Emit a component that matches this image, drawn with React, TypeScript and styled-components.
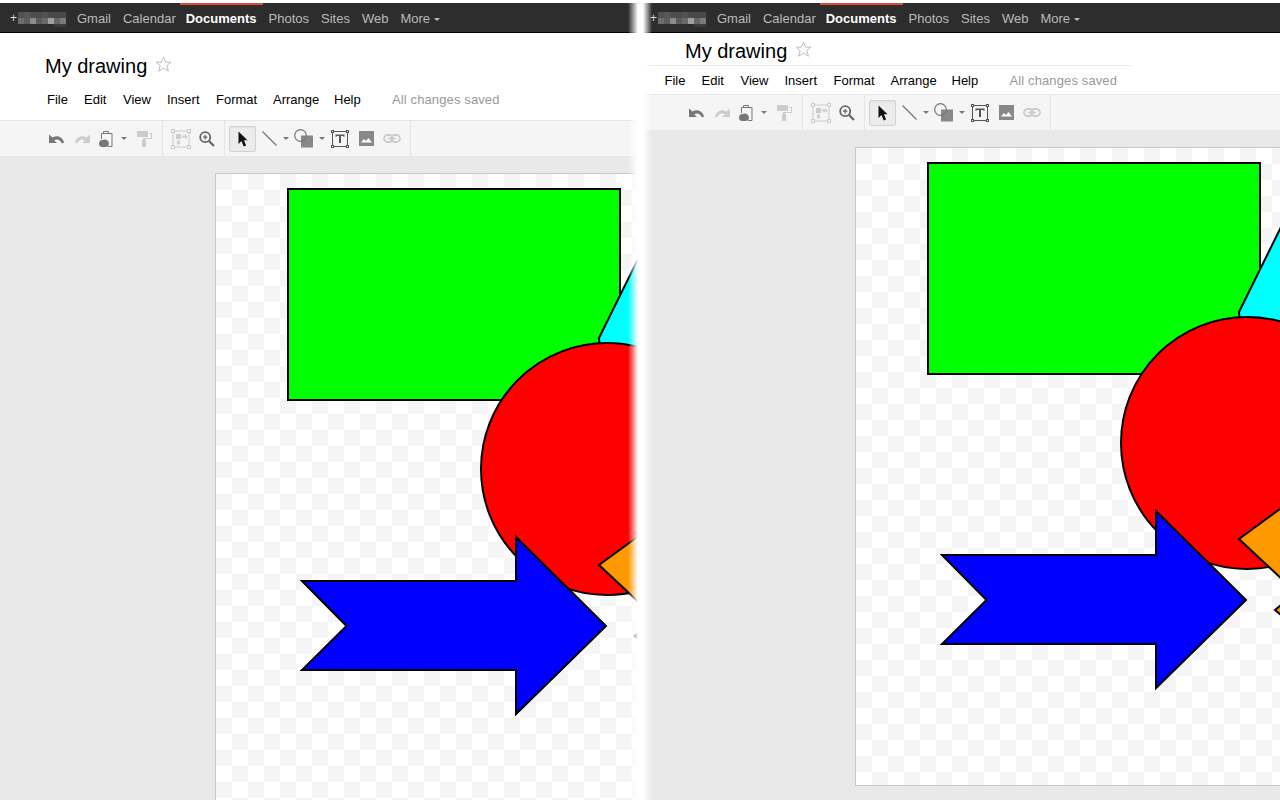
import styled, { createGlobalStyle } from "styled-components";

const GlobalStyle = createGlobalStyle`
  html, body {
    margin: 0;
    padding: 0;
    background: #fff;
    overflow: hidden;
  }
  body {
    font-family: "Liberation Sans", Arial, sans-serif;
  }
`;

const Page = styled.div`
  position: relative;
  display: flex;
  width: 1280px;
  height: 800px;
  padding-top: 3px;
  box-sizing: border-box;
  overflow: hidden;
`;

const Panel = styled.div`
  display: flex;
  flex-direction: column;
  width: 640px;
  height: 797px;
  overflow: hidden;
  background: #e9e9e9;
`;

/* white blur between the two halves of the picture */
const Fade = styled.div`
  position: absolute;
  top: 3px;
  bottom: 0;
  left: 628px;
  width: 24px;
  background: linear-gradient(
    to right,
    rgba(255, 255, 255, 0) 0,
    #fff 10px,
    #fff 15px,
    rgba(255, 255, 255, 0) 24px
  );
`;

const TopBar = styled.div`
  display: flex;
  flex: none;
  align-items: center;
  height: 29px;
  padding-left: 10px;
  background: #2d2d2d;
  border-bottom: 1px solid #000;
  font-size: 13px;
  color: #ccc;
`;

const Plus = styled.span`
  width: 8px;
  font-size: 12px;
  color: #ddd;
`;

const BarLink = styled.span<{ $active?: boolean }>`
  position: relative;
  display: flex;
  align-items: center;
  box-sizing: border-box;
  height: 29px;
  padding: 1px 6px 0;
  margin-left: ${(p) => (p.$active ? "-2px" : "0")};
  font-weight: ${(p) => (p.$active ? "bold" : "normal")};
  color: ${(p) => (p.$active ? "#fff" : "#bbb")};

  ${(p) =>
    p.$active &&
    `
    &::before {
      content: "";
      position: absolute;
      top: 0;
      left: 0;
      right: 0;
      height: 2px;
      background: #dd4b39;
    }
  `}
`;

const BarLinks = styled.div`
  display: flex;
  margin-left: 5px;
`;

const MoreCaret = styled.i`
  width: 0;
  height: 0;
  margin: 2px 0 0 4px;
  border: 3px solid transparent;
  border-top-color: #bbb;
  border-bottom: 0;
`;

const MosaicSvg = styled.svg`
  align-self: flex-start;
  margin-top: 9px;
`;

const Header = styled.div`
  flex: none;
  background: #fff;
`;

const TitleRow = styled.div<{ $compact?: boolean }>`
  display: flex;
  align-items: flex-start;
  box-sizing: border-box;
  height: ${(p) => (p.$compact ? "33px" : "52px")};
  width: ${(p) => (p.$compact ? "492px" : "auto")};
  padding: ${(p) => (p.$compact ? "5px" : "20px")} 0 0 45px;
  border-bottom: ${(p) => (p.$compact ? "1px solid #ebebeb" : "0")};
`;

const Title = styled.div`
  font-size: 20px;
  line-height: 26px;
  color: #000;
`;

const Star = styled.svg`
  margin: 3px 0 0 8px;
`;

const MenuRow = styled.div<{ $compact?: boolean }>`
  display: flex;
  align-items: center;
  box-sizing: border-box;
  height: ${(p) => (p.$compact ? "28px" : "35px")};
  padding: 0 0 ${(p) => (p.$compact ? "0" : "7px")} ${(p) => (p.$compact ? "24.5px" : "47px")};
  font-size: 13px;
  color: #000;
`;

const MenuItem = styled.span<{ $width: number }>`
  width: ${(p) => p.$width}px;
`;

const Saved = styled.span`
  color: #999;
  letter-spacing: 0.12px;
`;

const Toolbar = styled.div`
  display: flex;
  flex: none;
  box-sizing: border-box;
  height: 37px;
  background: #f5f5f5;
  border-top: 1px solid #e5e5e5;
  border-bottom: 1px solid #e5e5e5;
`;

const ToolGroup = styled.div<{ $left: number; $right: number }>`
  display: flex;
  align-items: center;
  padding: 0 ${(p) => p.$right}px 0 ${(p) => p.$left}px;
  border-right: 1px solid #e5e5e5;
`;

const ToolSlot = styled.div<{ $width: number }>`
  display: flex;
  align-items: center;
  justify-content: center;
  width: ${(p) => p.$width}px;
  height: 26px;
`;

const ActiveTool = styled(ToolSlot)`
  box-sizing: border-box;
  background: #ececec;
  border: 1px solid #d2d2d2;
  border-radius: 2px;
  box-shadow: inset 0 1px 2px rgba(0, 0, 0, 0.05);
`;

const Caret = styled.i`
  width: 0;
  height: 0;
  border: 3px solid transparent;
  border-top-color: #777;
  border-bottom: 0;
`;

const Workspace = styled.div`
  flex: 1;
  padding: 16px 0 0 215px;
  min-height: 0;
`;

const Canvas = styled.div`
  height: 637px;
  border: 1px solid #c8c8c8;
  border-right: 0;
  background: conic-gradient(#fff 25%, #f5f5f5 0 50%, #fff 0 75%, #f5f5f5 0) 0 0 / 32px 32px;
`;

const DrawingSvg = styled.svg`
  display: block;
`;

const MOSAIC = [
  "#505050 #585858 #4e4e4e #4c4c4c #525252 #4a4a4a #484848 #4a4a4a",
  "#6e6e6e #5c5c5c #8a8a8a #5a5a5a #6a6a6a #a0a0a0 #666666 #7a7a7a",
  "#2d2d2d #2d2d2d #2d2d2d #2d2d2d #2d2d2d #2d2d2d #3c3c3c #3c3c3c",
].map((row) => row.split(" "));

function Mosaic() {
  return (
    <MosaicSvg width="48" height="15" viewBox="0 0 48 15">
      {MOSAIC.map((row, y) =>
        row.map((fill, x) => (
          <rect key={`${x}-${y}`} x={x * 6} y={y * 6} width="6" height={y === 2 ? 3 : 6} fill={fill} />
        ))
      )}
    </MosaicSvg>
  );
}

function StarIcon() {
  return (
    <Star width="17" height="17" viewBox="0 0 17 17">
      <path
        d="M8.5 1.2l2.2 5h5.3l-4.2 3.4 1.6 5.6-4.9-3.1-4.9 3.1 1.6-5.6L1 6.2h5.3z"
        fill="#fff"
        stroke="#bdbdbd"
      />
    </Star>
  );
}

const UndoIcon = ({ color, flip }: { color: string; flip?: boolean }) => (
  <svg width="17" height="12" viewBox="0 0 17 12" style={flip ? { transform: "scaleX(-1)" } : undefined}>
    <path
      d="M1 1.5V10h8L6.2 7.4C8.6 5.8 12 6.3 14 10.5l2.2-1C14.4 3.8 9 1.5 4.5 4.6z"
      fill={color}
    />
  </svg>
);

const PasteIcon = () => (
  <svg width="14" height="16" viewBox="0 0 14 16">
    <path d="M2.500 8V2.500h10.500V15.500H9" fill="none" stroke="#777" />
    <path d="M4.500 2.500V0.500h5v2" fill="none" stroke="#777" />
    <path d="M0 12.500C0 10 2 8.500 4 9 6.500 7.500 10 9.500 10 12.500 10 14.500 8.500 16 6.500 16H3C1.200 16 0 14.500 0 12.500z" fill="#777" />
  </svg>
);

const RollerIcon = () => (
  <svg width="15" height="16" viewBox="0 0 15 16">
    <path d="M0 0h11v6H0zM12 2h3v6H8v2H6V7h8V3h-2z" fill="#ccc" />
    <rect x="5" y="9" width="4" height="7" fill="#ccc" />
  </svg>
);

const ArrangeIcon = () => (
  <svg width="20" height="20" viewBox="0 0 20 20">
    <rect x="2" y="2" width="16" height="16" fill="none" stroke="#ccc" />
    {[0.5, 16.5].map((x) =>
      [0.5, 16.5].map((y) => (
        <rect key={`${x}-${y}`} x={x} y={y} width="3" height="3" fill="#f5f5f5" stroke="#ccc" />
      ))
    )}
    <rect x="5" y="5" width="5" height="5" fill="#ccc" />
    <path d="M11 6.500h3V5l2.500 2.500L14 10V8.500h-3zM6.500 11h2v2.500H10L7.500 16 5 13.500h1.500z" fill="#ccc" />
  </svg>
);

const ZoomIcon = () => (
  <svg width="16" height="16" viewBox="0 0 16 16">
    <circle cx="6.200" cy="6.200" r="5" fill="none" stroke="#666" strokeWidth="1.800" />
    <path d="M4 6.200h4.400M6.200 4v4.400" stroke="#666" strokeWidth="1.300" />
    <path d="M10 10l5 5" stroke="#666" strokeWidth="2.200" />
  </svg>
);

const CursorIcon = () => (
  <svg width="10" height="16" viewBox="0 0 10 16">
    <path d="M0.500 0.500v12.500l3-3 2.200 5.500 2.400-1-2.200-5.300H9.500z" fill="#111" />
  </svg>
);

const LineIcon = () => (
  <svg width="15" height="15" viewBox="0 0 15 15">
    <path d="M0.500 0.500l14 14" stroke="#777" strokeWidth="1.300" />
  </svg>
);

const ShapeIcon = () => (
  <svg width="20" height="19" viewBox="0 0 20 19">
    <rect x="7" y="6.500" width="12" height="12" fill="#888" />
    <circle cx="6.500" cy="6.500" r="5.800" fill="none" stroke="#777" strokeWidth="1.200" />
  </svg>
);

const TextIcon = () => (
  <svg width="18" height="18" viewBox="0 0 18 18">
    <rect x="1.500" y="1.500" width="15" height="15" fill="none" stroke="#555" />
    {[0, 15].map((x) =>
      [0, 15].map((y) => (
        <rect key={`${x}-${y}`} x={x + 0.5} y={y + 0.5} width="2" height="2" fill="#f5f5f5" stroke="#555" />
      ))
    )}
    <path d="M4.500 4.500h9v2.300h-1.200V6H10v7H8V6H5.700v.8H4.500z" fill="#555" />
  </svg>
);

const ImageIcon = () => (
  <svg width="15" height="15" viewBox="0 0 15 15">
    <rect width="15" height="15" fill="#888" />
    <path d="M2 11.500l3-3.500 2 2 2.500-3 3.500 4.500z" fill="#fff" />
  </svg>
);

const LinkIcon = () => (
  <svg width="18" height="9" viewBox="0 0 18 9">
    <rect x="1" y="1" width="9" height="7" rx="3.500" fill="none" stroke="#ccc" strokeWidth="1.800" />
    <rect x="8" y="1" width="9" height="7" rx="3.500" fill="none" stroke="#ccc" strokeWidth="1.800" />
    <path d="M5 4.500h8" stroke="#ccc" strokeWidth="1.500" />
  </svg>
);

function ToolRow() {
  return (
    <Toolbar>
      <ToolGroup $left={43} $right={5}>
        <ToolSlot $width={26}><UndoIcon color="#777" /></ToolSlot>
        <ToolSlot $width={26}><UndoIcon color="#ccc" flip /></ToolSlot>
        <ToolSlot $width={22}><PasteIcon /></ToolSlot>
        <ToolSlot $width={14}><Caret /></ToolSlot>
        <ToolSlot $width={26}><RollerIcon /></ToolSlot>
      </ToolGroup>
      <ToolGroup $left={5} $right={4}>
        <ToolSlot $width={26}><ArrangeIcon /></ToolSlot>
        <ToolSlot $width={26}><ZoomIcon /></ToolSlot>
      </ToolGroup>
      <ToolGroup $left={4} $right={5}>
        <ActiveTool $width={27}><CursorIcon /></ActiveTool>
        <ToolSlot $width={26}><LineIcon /></ToolSlot>
        <ToolSlot $width={8}><Caret /></ToolSlot>
        <ToolSlot $width={28}><ShapeIcon /></ToolSlot>
        <ToolSlot $width={8}><Caret /></ToolSlot>
        <ToolSlot $width={28}><TextIcon /></ToolSlot>
        <ToolSlot $width={25}><ImageIcon /></ToolSlot>
        <ToolSlot $width={26}><LinkIcon /></ToolSlot>
      </ToolGroup>
    </Toolbar>
  );
}

function Drawing() {
  return (
    <DrawingSvg width="424" height="637" viewBox="0 0 424 637">
      <g stroke="#000" strokeWidth="2" strokeLinejoin="miter">
        <rect x="72" y="15" width="332" height="211" fill="#00ff00" />
        <path d="M383 164l43-87v100h-42z" fill="#00ffff" />
        <circle cx="391" cy="295" r="126" fill="#ff0000" />
        <path d="M383 391l60-44v100z" fill="#ff9900" />
        <path d="M419 462l12-10v20z" fill="#ff9900" />
        <path d="M86 407l44.500 45L86 496h214v44l90-88-90-89v44z" fill="#0000ff" />
      </g>
    </DrawingSvg>
  );
}

const NAV = ["Gmail", "Calendar", "Documents", "Photos", "Sites", "Web"];
// column widths read from the reference, text there is hinted a bit wider
const MENU: [string, number][] = [
  ["File", 37],
  ["Edit", 39],
  ["View", 44],
  ["Insert", 49],
  ["Format", 57],
  ["Arrange", 61],
  ["Help", 58],
];

function DrawingWindow({ compact }: { compact?: boolean }) {
  return (
    <Panel>
      <TopBar>
        <Plus>+</Plus>
        <Mosaic />
        <BarLinks>
          {NAV.map((name) => (
            <BarLink key={name} $active={name === "Documents"}>{name}</BarLink>
          ))}
          <BarLink>
            More
            <MoreCaret />
          </BarLink>
        </BarLinks>
      </TopBar>
      <Header>
        <TitleRow $compact={compact}>
          <Title>My drawing</Title>
          <StarIcon />
        </TitleRow>
        <MenuRow $compact={compact}>
          {MENU.map(([name, width]) => (
            <MenuItem key={name} $width={width}>{name}</MenuItem>
          ))}
          <Saved>All changes saved</Saved>
        </MenuRow>
      </Header>
      <ToolRow />
      <Workspace>
        <Canvas>
          <Drawing />
        </Canvas>
      </Workspace>
    </Panel>
  );
}

export default function App() {
  return (
    <Page>
      <GlobalStyle />
      <DrawingWindow />
      <DrawingWindow compact />
      <Fade />
    </Page>
  );
}
